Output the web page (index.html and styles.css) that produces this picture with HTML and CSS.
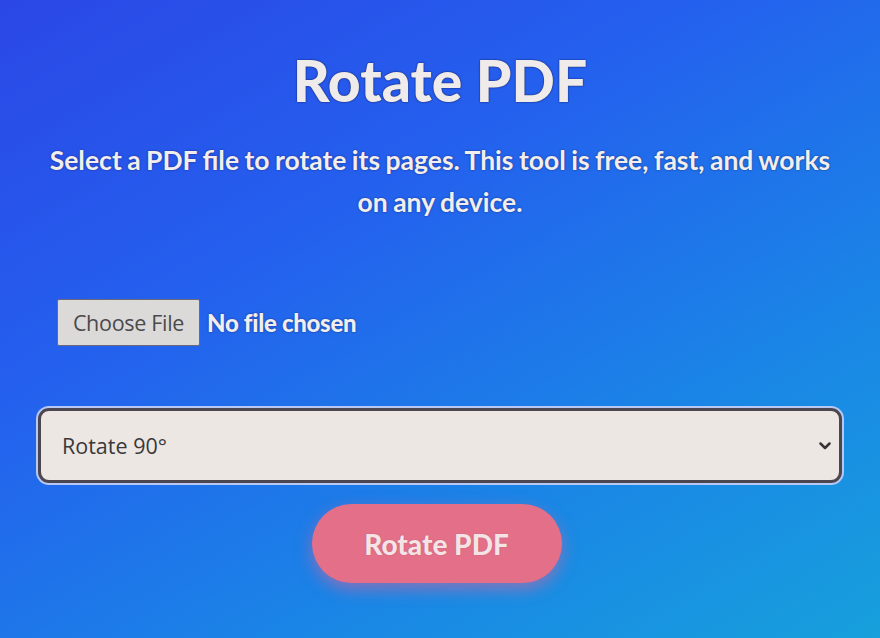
FILE: index.html
```html
<!DOCTYPE html>
<html lang="en">
<head>
<meta charset="utf-8">
<title>Rotate PDF</title>
<link rel="stylesheet" href="styles.css">
</head>
<body>
<main class="page">
  <h1 class="title">Rotate PDF</h1>
  <p class="intro">Select a PDF file to rotate its pages. This tool is free, fast, and works on any device.</p>
  <form class="form">
    <div class="file-row">
      <span class="file-btn">Choose File</span>
      <span class="file-name">No file chosen</span>
    </div>
    <div class="select">
      <span class="select-text">Rotate 90°</span>
      <svg class="chev" width="12" height="8" viewBox="0 0 12 8"><path d="M1.5 1.5 L6 6 L10.5 1.5" fill="none" stroke="#3a3438" stroke-width="2.5" stroke-linecap="round" stroke-linejoin="round"/></svg>
    </div>
    <div class="actions">
      <span class="go">Rotate PDF</span>
    </div>
  </form>
</main>
</body>
</html>
```
FILE: styles.css
```css
html, body {
  margin: 0;
  padding: 0;
}
body {
  width: 880px;
  height: 638px;
  overflow: hidden;
  background: linear-gradient(150deg, #2b47e6 0%, #2460ee 35%, #1a85e6 70%, #17a0dc 100%);
  font-family: Lato, "Open Sans", sans-serif;
  color: #f4f1f0;
}
.page {
  display: flex;
  flex-direction: column;
  align-items: center;
  padding: 50px 38px 0;
}
.title {
  margin: 0;
  font-size: 57px;
  line-height: 60px;
  font-weight: 900;
  color: #efebea;
  text-shadow: 0 0 2px rgba(20, 20, 70, 0.7), 0 0 1px rgba(20, 20, 70, 0.8);
}
.intro {
  margin: 29px 0 0;
  width: 786px;
  text-align: center;
  font-size: 26.5px;
  line-height: 42px;
  font-weight: 700;
  letter-spacing: 0;
  word-spacing: -1px;
  color: #f2eeee;
  text-shadow: 0 0 2px rgba(20, 20, 70, 0.7);
}
.form {
  width: 804px;
  margin-top: 76px;
  display: flex;
  flex-direction: column;
}
.file-row {
  display: flex;
  align-items: center;
  gap: 7px;
  padding-left: 19px;
  height: 47px;
}
.file-btn {
  box-sizing: border-box;
  height: 47px;
  width: 143px;
  display: flex;
  align-items: center;
  justify-content: center;
  background: #dcdad8;
  border: 1px solid #6a6a7a;
  border-radius: 2px;
  color: #4a4a4c;
  font-family: "Open Sans", sans-serif;
  font-size: 21.5px;
  letter-spacing: -0.3px;
}
.file-name {
  font-size: 24px;
  font-weight: 900;
  letter-spacing: -0.3px;
  color: #f0eef0;
  text-shadow: 0 0 2px rgba(20, 20, 70, 0.7);
}
.select {
  box-sizing: border-box;
  margin-top: 62px;
  height: 75px;
  display: flex;
  align-items: center;
  justify-content: space-between;
  padding: 0 8px 0 21px;
  background: #ece7e3;
  border: 3px solid #4c4650;
  border-radius: 11px;
  box-shadow: 0 0 0 2px #b8c8f4;
}
.select-text {
  font-family: "Open Sans", sans-serif;
  font-size: 21.5px;
  color: #3a383a;
}
.chev {
  display: block;
}
.actions {
  display: flex;
  justify-content: center;
  margin-top: 21px;
  padding-right: 7px;
}
.go {
  width: 250px;
  height: 79px;
  border-radius: 40px;
  display: flex;
  align-items: center;
  justify-content: center;
  background: #e37088;
  box-shadow: 0 6px 16px rgba(230, 100, 150, 0.55);
  color: #f6e3e6;
  font-size: 28px;
  font-weight: 900;
  text-shadow: 0 0 1px rgba(120, 40, 60, 0.5);
}
```
